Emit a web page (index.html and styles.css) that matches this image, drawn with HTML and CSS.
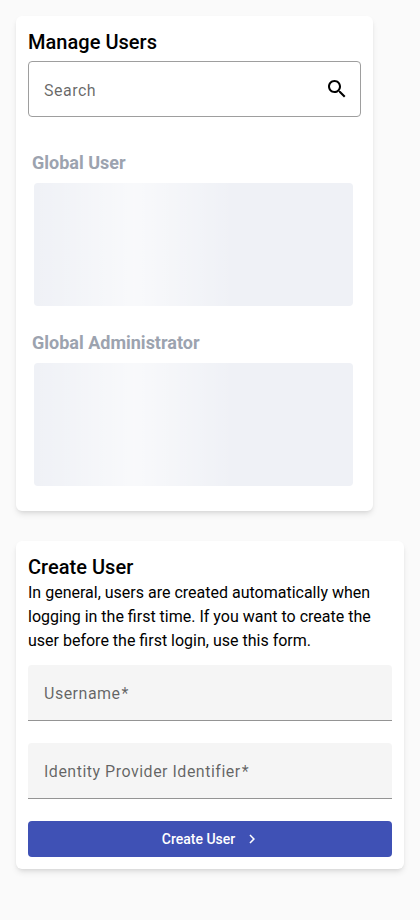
FILE: index.html
```html
<!DOCTYPE html>
<html lang="en">
<head>
<meta charset="utf-8">
<title>Manage Users</title>
<link rel="stylesheet" href="styles.css">
</head>
<body>
<section class="card manage">
  <h2>Manage Users</h2>
  <div class="search"><span>Search</span>
    <svg width="24" height="24" viewBox="0 0 24 24"><path d="M15.5 14h-.79l-.28-.27C15.41 12.59 16 11.11 16 9.5 16 5.91 13.09 3 9.5 3S3 5.91 3 9.5 5.91 16 9.5 16c1.61 0 3.09-.59 4.23-1.57l.27.28v.79l5 4.99L20.49 19l-4.99-5zm-6 0C7.01 14 5 11.99 5 9.5S7.01 5 9.5 5 14 7.01 14 9.5 11.99 14 9.5 14z"/></svg>
  </div>
  <div class="group"><h3>Global User</h3><div class="skeleton"></div></div>
  <div class="group"><h3>Global Administrator</h3><div class="skeleton"></div></div>
</section>
<section class="card create">
  <h2>Create User</h2>
  <p>In general, users are created automatically when logging in the first time. If you want to create the user before the first login, use this form.</p>
  <div class="field">Username<span class="required">*</span></div>
  <div class="field">Identity Provider Identifier<span class="required">*</span></div>
  <button class="submit"><span>Create User</span>
    <svg width="18" height="18" viewBox="0 0 24 24"><path fill="currentColor" d="M10 6 8.59 7.41 13.17 12l-4.58 4.59L10 18l6-6z"/></svg>
  </button>
</section>
</body>
</html>
```
FILE: styles.css
```css
* { box-sizing: border-box; }
body { margin: 0; padding: 16px; background: #fafafa; color: #000; font-family: Roboto, sans-serif; font-size: 16px; -webkit-font-smoothing: antialiased; }
h2, h3, p { margin: 0; }
h2 { font-size: 20px; font-weight: 500; line-height: 28px; letter-spacing: .03px; }
.card { background: #fff; border-radius: 6px; padding: 12px; box-shadow: 0 4px 6px -1px rgba(0,0,0,.1), 0 2px 4px -2px rgba(0,0,0,.1); }
.manage { width: 357px; height: 495px; margin-bottom: 30px; }
.search { height: 56px; margin-top: 5px; padding: 0 11px 0 15px; display: flex; align-items: center; justify-content: space-between; border: 1px solid #9e9e9e; border-radius: 4px; color: rgba(0,0,0,.6); letter-spacing: .5px; line-height: 24px; }
.search span { padding-top: 3px; }
.group { margin-top: 32px; padding: 0 8px 0 4px; }
.group + .group { margin-top: 23px; }
h3 { font-size: 18px; font-weight: 700; line-height: 28px; color: #9ca3af; }
.skeleton { height: 123px; margin: 6px 0 0 2px; border-radius: 4px; background: #eff1f6 linear-gradient(90deg, rgba(255,255,255,0), rgba(255,255,255,.6), rgba(255,255,255,0)) 0 0 / 200px 100% no-repeat; }
.create { height: 328px; }
.create p { line-height: 24px; }
.field { height: 56px; margin-top: 12px; padding: 0 16px; line-height: 57px; background: #f5f5f5; border-bottom: 1px solid #949494; border-radius: 4px 4px 0 0; color: rgba(0,0,0,.6); letter-spacing: .5px; }
.field + .field { margin-top: 22px; }
.required { margin-left: 1px; }
.submit { width: 100%; height: 36px; margin-top: 22px; padding: 0 0 0 3px; display: flex; align-items: center; justify-content: center; gap: 8px; border: 0; border-radius: 4px; background: #3f51b5; color: #fff; font: 500 14px Roboto, sans-serif; }
```
